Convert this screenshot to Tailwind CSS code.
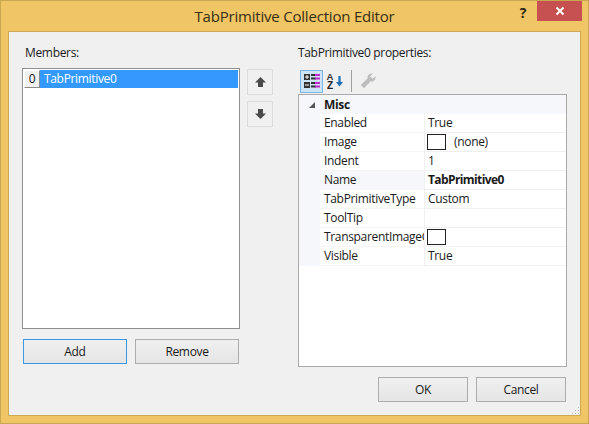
<!DOCTYPE html>
<html lang="en">
<head>
  <meta charset="UTF-8" />
  <title>TabPrimitive Collection Editor</title>
  <script src="https://cdn.jsdelivr.net/npm/@tailwindcss/browser@4"></script>
</head>
<body class="font-['Open_Sans',sans-serif] text-[12px] tracking-[-0.33px] text-[#1a1a1a]">
  <div class="w-[589px] h-[424px] overflow-hidden flex flex-col bg-[#efc566] border border-[#c9a650]">
    <!-- title bar -->
    <div class="relative h-[30px] shrink-0 flex items-center justify-center">
      <span class="text-[15px] text-[#3a2f14] tracking-[-0.2px]">TabPrimitive Collection Editor</span>
      <span class="absolute right-[62px] top-[1px] text-[14px] font-bold text-[#2e2510]">?</span>
      <div class="absolute right-[6px] top-0 w-[45px] h-[20px] bg-[#c75050] flex items-center justify-center">
        <svg width="10" height="10" viewBox="0 0 10 10"><path d="M1.500 1.500l7 7M8.500 1.500l-7 7" stroke="#fff" stroke-width="2"/></svg>
      </div>
    </div>

    <!-- client area -->
    <div class="relative flex-1 mx-[7px] mb-[7px] bg-[#f0f0f0] border border-[#cda954] flex pl-[13px] pt-[13px]">
      <!-- members -->
      <div class="w-[218px] shrink-0 flex flex-col">
        <label class="pl-[3px] h-[23px] leading-[16px]">Members:</label>
        <div class="h-[261px] bg-white border border-[#8f8f8f] p-[1px]">
          <div class="flex h-[18px]">
            <div class="w-[16px] h-[18px] bg-[#f0f0f0] border border-t-white border-l-white border-r-[#8a8a8a] border-b-[#8a8a8a] flex items-center justify-center">0</div>
            <div class="flex-1 bg-[#3399ff] text-white pl-[4px] leading-[17px]">TabPrimitive0</div>
          </div>
        </div>
        <div class="flex gap-[8px] mt-[10px] pl-[1px]">
          <button class="w-[104px] h-[25px] border border-[#3c97e0] bg-gradient-to-b from-[#f0f0f0] to-[#e5e5e5]">Add</button>
          <button class="w-[104px] h-[25px] border border-[#acacac] bg-gradient-to-b from-[#f0f0f0] to-[#e5e5e5]">Remove</button>
        </div>
      </div>

      <!-- move buttons -->
      <div class="w-[26px] ml-[7px] mt-[24px] flex flex-col gap-[6px] shrink-0">
        <button class="w-[26px] h-[26px] border border-[#dcdcdc] bg-[#f0f0f0] flex items-center justify-center">
          <svg width="11" height="10" viewBox="0 0 11 10"><path d="M5.500 0L11 5.500H8V10H3V5.500H0z" fill="#4a4a4a"/></svg>
        </button>
        <button class="w-[26px] h-[26px] border border-[#dcdcdc] bg-[#f0f0f0] flex items-center justify-center">
          <svg width="11" height="10" viewBox="0 0 11 10"><path d="M5.500 10L11 4.500H8V0H3V4.500H0z" fill="#4a4a4a"/></svg>
        </button>
      </div>

      <!-- properties -->
      <div class="w-[269px] ml-[25px] shrink-0 flex flex-col">
        <label class="h-[24px] leading-[16px]">TabPrimitive0 properties:</label>
        <div class="h-[24px] flex items-center pl-[2px] gap-[1px] shrink-0">
          <div class="w-[23px] h-[23px] bg-[#cce4f7] border border-[#7db4e0] flex items-center justify-center">
            <svg width="17" height="16" viewBox="0 0 17 16">
              <path d="M1 1h6v6H1zM1 9h6v6H1z" fill="#333"/>
              <path d="M2 3.500h4v1H2zM3.500 2h1v4h-1zM2 11.500h4v1H2z" fill="#fff"/>
              <path d="M8 2h5M8 5.500h5M8 10h5M8 13.500h5" stroke="#333" stroke-width="2"/>
              <path d="M12 1h5v2h-5zM12 4.500h5v2h-5zM12 9h5v2h-5zM12 12.500h5v2h-5z" fill="#c428c8"/>
            </svg>
          </div>
          <div class="w-[23px] h-[23px] flex items-center justify-center">
            <svg width="19" height="18" viewBox="0 0 19 18">
              <text x="0.500" y="8" font-family="'Liberation Sans',sans-serif" font-weight="700" font-size="9.500" letter-spacing="0" fill="#333">A</text>
              <text x="1" y="17" font-family="'Liberation Sans',sans-serif" font-weight="700" font-size="10" letter-spacing="0" fill="#222">Z</text>
              <path d="M13.500 4v8" stroke="#1a6fb5" stroke-width="2.200"/>
              <path d="M10 10l3.500 4.500L17 10z" fill="#1a6fb5"/>
            </svg>
          </div>
          <div class="w-px h-[22px] bg-[#a0a0a0] mx-[3px]"></div>
          <div class="w-[23px] h-[23px] flex items-center justify-center">
            <svg width="16" height="16" viewBox="0 0 15 15"><path d="M14.500 3l-2.700 2.500L9.500 3.200 12 .5C9 0 6.500 2 7.200 5L.8 11.300 3.700 14.200 10 7.800C13 8.500 15 6 14.500 3z" fill="#bdbdbd"/></svg>
          </div>
        </div>
        <div class="h-[273px] mt-[1px] bg-white border border-[#a9a9a9] flex flex-col">
          <div class="h-[19px] bg-[#f5f7fa] flex items-center font-bold shrink-0">
            <svg class="ml-[9px]" width="8" height="8" viewBox="0 0 8 8"><path d="M7 1v6H1z" fill="#555"/></svg>
            <span class="ml-[8px]">Misc</span>
          </div>
          <div class="flex h-[19px] leading-[18px]">
            <div class="w-[21px] bg-[#f5f7fa]"></div>
            <div class="w-[104px] pl-[4px] border-b border-[#f5f5f5] whitespace-nowrap overflow-hidden">Enabled</div>
            <div class="flex-1 pl-[3px] border-l border-b border-[#f0f0f0]">True</div>
          </div>
          <div class="flex h-[19px] leading-[18px]">
            <div class="w-[21px] bg-[#f5f7fa]"></div>
            <div class="w-[104px] pl-[4px] border-b border-[#f5f5f5]">Image</div>
            <div class="flex-1 pl-[2px] border-l border-b border-[#f0f0f0] flex items-center">
              <div class="w-[19px] h-[16px] border border-[#222] bg-white"></div>
              <span class="ml-[8px]">(none)</span>
            </div>
          </div>
          <div class="flex h-[19px] leading-[18px]">
            <div class="w-[21px] bg-[#f5f7fa]"></div>
            <div class="w-[104px] pl-[4px] border-b border-[#f5f5f5]">Indent</div>
            <div class="flex-1 pl-[3px] border-l border-b border-[#f0f0f0]">1</div>
          </div>
          <div class="flex h-[19px] leading-[18px]">
            <div class="w-[21px] bg-[#f5f7fa]"></div>
            <div class="w-[104px] pl-[4px] bg-[#f5f7fa]">Name</div>
            <div class="flex-1 pl-[3px] border-l border-b border-[#f0f0f0] font-bold tracking-[-0.6px]">TabPrimitive0</div>
          </div>
          <div class="flex h-[19px] leading-[18px]">
            <div class="w-[21px] bg-[#f5f7fa]"></div>
            <div class="w-[104px] pl-[4px] border-b border-[#f5f5f5] whitespace-nowrap overflow-hidden">TabPrimitiveType</div>
            <div class="flex-1 pl-[3px] border-l border-b border-[#f0f0f0]">Custom</div>
          </div>
          <div class="flex h-[19px] leading-[18px]">
            <div class="w-[21px] bg-[#f5f7fa]"></div>
            <div class="w-[104px] pl-[4px] border-b border-[#f5f5f5]">ToolTip</div>
            <div class="flex-1 pl-[3px] border-l border-b border-[#f0f0f0]"></div>
          </div>
          <div class="flex h-[19px] leading-[18px]">
            <div class="w-[21px] bg-[#f5f7fa]"></div>
            <div class="w-[104px] pl-[4px] border-b border-[#f5f5f5] whitespace-nowrap overflow-hidden">TransparentImageColor</div>
            <div class="flex-1 pl-[2px] border-l border-b border-[#f0f0f0] flex items-center">
              <div class="w-[19px] h-[16px] border border-[#222] bg-white"></div>
            </div>
          </div>
          <div class="flex h-[19px] leading-[18px]">
            <div class="w-[21px] bg-[#f5f7fa]"></div>
            <div class="w-[104px] pl-[4px] border-b border-[#f5f5f5]">Visible</div>
            <div class="flex-1 pl-[3px] border-l border-b border-[#f0f0f0]">True</div>
          </div>
        </div>
      </div>

      <!-- footer buttons -->
      <div class="absolute right-[14px] bottom-[13px] flex gap-[8px]">
        <button class="w-[90px] h-[25px] border border-[#acacac] bg-gradient-to-b from-[#f0f0f0] to-[#e5e5e5]">OK</button>
        <button class="w-[90px] h-[25px] border border-[#acacac] bg-gradient-to-b from-[#f0f0f0] to-[#e5e5e5]">Cancel</button>
      </div>
      <!-- size grip -->
      <svg class="absolute right-0 bottom-0" width="10" height="10" viewBox="0 0 10 10"><path d="M8 2h1v1H8zM8 5h1v1H8zM8 8h1v1H8zM5 5h1v1H5zM5 8h1v1H5zM2 8h1v1H2z" fill="#b8b8b8"/></svg>
    </div>
  </div>
</body>
</html>
